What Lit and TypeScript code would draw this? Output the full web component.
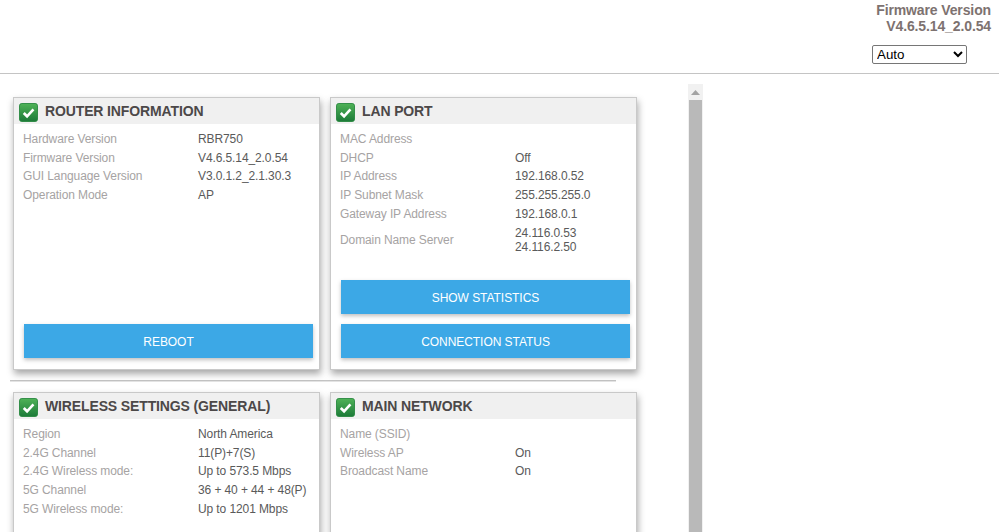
import { LitElement, html, css } from "lit";
import { customElement } from "lit/decorators.js";

type Row = [string, string | string[]];
const check = html`<svg class="chk" viewBox="0 0 20 20" width="19" height="19">
  <defs><linearGradient id="g" x1="0" y1="0" x2="0" y2="1"><stop offset="0" stop-color="#4fb257"/><stop offset="1" stop-color="#1c7a38"/></linearGradient></defs>
  <rect x="0.5" y="0.5" width="19" height="19" rx="2.5" fill="url(#g)" stroke="#2c8a42" stroke-width="1"/>
  <path d="M5 10.5 L8.5 14 L15.2 6.8" fill="none" stroke="#fff" stroke-width="2.8"/>
</svg>`;

@customElement("app-root")
export class AppRoot extends LitElement {
  static styles = css`
    :host { display: block; width: 999px; height: 532px; overflow: hidden; background: #fff; font-family: "Liberation Sans", Arial, sans-serif; }
    .top { box-sizing: border-box; border-bottom: 1px solid #c4c4c4; display: flex; flex-direction: column; align-items: flex-end; padding: 2px 8px 0 0; height: 74px; }
    .fw { font-size: 14px; font-weight: 700; color: #7d7270; text-align: right; line-height: 16px; letter-spacing: -.12px; }
    select { width: 95px; height: 19px; margin: 11px 24px 0 0; font: 13.33px "Liberation Sans", Arial, sans-serif; background: #fff; color: #000; border: 1px solid #767676; border-radius: 2px; padding: 0; box-sizing: border-box; }
    .main { display: flex; }
    .content { width: 688px; padding: 23px 0 0 13px; box-sizing: border-box; }
    .cards { display: flex; gap: 10px; }
    .card { width: 307px; height: 273px; box-sizing: border-box; border: 1px solid #c9c9c9; box-shadow: 1px 4px 7px rgba(0,0,0,.35); background: #fff; display: flex; flex-direction: column; flex: none; }
    .head { height: 26px; background: #f0f0f0; display: flex; align-items: center; padding-left: 5px; gap: 7px; flex: none; }
    .chk { flex: none; margin-top: 2px; }
    h2 { margin: 0; font-size: 14px; font-weight: 700; color: #4c4848; letter-spacing: -.13px; }
    .rows { padding: 5.5px 9px 0; }
    .row { display: flex; align-items: center; min-height: 18.8px; font-size: 12px; letter-spacing: -.1px; }
    .row.multi { margin-top: 3px; padding-bottom: 5px; }
    .k { width: 175px; color: #a6a3a3; flex: none; }
    .v { color: #5a5a5a; line-height: 14px; }
    .btns { margin-top: auto; padding: 0 6px 11px 10px; display: flex; flex-direction: column; gap: 10px; }
    button { height: 34px; border: none; background: #3ca8e6; color: #fff; font: 12px "Liberation Sans", Arial, sans-serif; letter-spacing: -.05px; box-shadow: 0 2px 4px rgba(0,0,0,.25); padding: 1px 0 0; }
    .div { width: 606px; height: 0; border-top: 1px solid #c4c4c4; margin: 10px 0 11px -3px; box-shadow: 0 1px 0 #e4e4e4; }
    .bar { width: 15px; margin-top: 10px; height: 448px; background: #f1f1f1; display: flex; flex-direction: column; align-items: center; flex: none; }
    .arrow { height: 16px; display: flex; align-items: center; justify-content: center; flex: none; }
    .thumb { width: 13px; flex: 1; background: #b9b9b9; }
  `;

  private card(title: string, rows: Row[], btns: string[] = []) {
    return html`<section class="card">
      <div class="head">${check}<h2>${title}</h2></div>
      <div class="rows">
        ${rows.map(([k, v]) => html`<div class="row ${Array.isArray(v) ? "multi" : ""}"><span class="k">${k}</span>
          <span class="v">${Array.isArray(v) ? v.map((x) => html`<div>${x}</div>`) : v}</span></div>`)}
      </div>
      <div class="btns">${btns.map((b) => html`<button>${b}</button>`)}</div>
    </section>`;
  }

  render() {
    return html`
      <header class="top">
        <div class="fw">Firmware Version<br />V4.6.5.14_2.0.54</div>
        <select><option>Auto</option></select>
      </header>
      <div class="main">
        <div class="content">
          <div class="cards">
            ${this.card("ROUTER INFORMATION", [
              ["Hardware Version", "RBR750"],
              ["Firmware Version", "V4.6.5.14_2.0.54"],
              ["GUI Language Version", "V3.0.1.2_2.1.30.3"],
              ["Operation Mode", "AP"],
            ], ["REBOOT"])}
            ${this.card("LAN PORT", [
              ["MAC Address", ""],
              ["DHCP", "Off"],
              ["IP Address", "192.168.0.52"],
              ["IP Subnet Mask", "255.255.255.0"],
              ["Gateway IP Address", "192.168.0.1"],
              ["Domain Name Server", ["24.116.0.53", "24.116.2.50"]],
            ], ["SHOW STATISTICS", "CONNECTION STATUS"])}
          </div>
          <div class="div"></div>
          <div class="cards">
            ${this.card("WIRELESS SETTINGS (GENERAL)", [
              ["Region", "North America"],
              ["2.4G Channel", "11(P)+7(S)"],
              ["2.4G Wireless mode:", "Up to 573.5 Mbps"],
              ["5G Channel", "36 + 40 + 44 + 48(P)"],
              ["5G Wireless mode:", "Up to 1201 Mbps"],
            ])}
            ${this.card("MAIN NETWORK", [
              ["Name (SSID)", ""],
              ["Wireless AP", "On"],
              ["Broadcast Name", "On"],
            ])}
          </div>
        </div>
        <div class="bar">
          <div class="arrow"><svg width="9" height="5" viewBox="0 0 9 5"><path d="M4.5 0 L9 5 H0 Z" fill="#a3a3a3"/></svg></div>
          <div class="thumb"></div>
        </div>
      </div>
    `;
  }
}
